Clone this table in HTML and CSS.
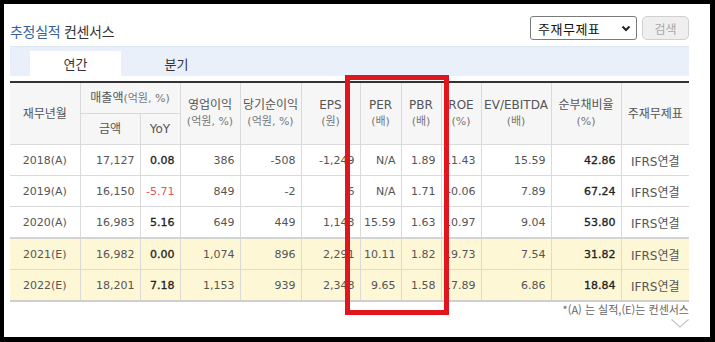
FILE: index.html
```html
<!DOCTYPE html>
<html lang="ko">
<head>
<meta charset="utf-8">
<link rel="stylesheet" href="styles.css">
</head>
<body>
<div class="panel">
  <div class="topbar">
    <h2 class="title"><span class="title-blue">추정실적</span> 컨센서스</h2>
    <div class="controls">
      <div class="select"><span>주재무제표</span>
        <svg class="sel-arrow" width="10" height="7" viewBox="0 0 10 7"><polyline points="1.5,1.5 5,5 8.5,1.5" fill="none" stroke="#222" stroke-width="2"/></svg>
      </div>
      <div class="btn">검색</div>
    </div>
  </div>
  <div class="tabs">
    <div class="tab active">연간</div>
    <div class="tab">분기</div>
  </div>
  <table class="grid">
    <colgroup>
      <col style="width:70px"><col style="width:60px"><col style="width:40px"><col style="width:60px"><col style="width:61px"><col style="width:59px"><col style="width:41px"><col style="width:40px"><col style="width:40px"><col style="width:70px"><col style="width:70px"><col style="width:68px">
    </colgroup>
    <thead>
      <tr class="h1">
        <th rowspan="2" class="first">재무년월</th>
        <th colspan="2">매출액<span class="unit">(억원, %)</span></th>
        <th rowspan="2">영업이익<br><span class="unit">(억원, %)</span></th>
        <th rowspan="2">당기순이익<br><span class="unit">(억원, %)</span></th>
        <th rowspan="2">EPS<br><span class="unit">(원)</span></th>
        <th rowspan="2">PER<br><span class="unit">(배)</span></th>
        <th rowspan="2">PBR<br><span class="unit">(배)</span></th>
        <th rowspan="2">ROE<br><span class="unit">(%)</span></th>
        <th rowspan="2">EV/EBITDA<br><span class="unit">(배)</span></th>
        <th rowspan="2">순부채비율<br><span class="unit">(%)</span></th>
        <th rowspan="2" class="last">주재무제표</th>
      </tr>
      <tr class="h2">
        <th>금액</th>
        <th>YoY</th>
      </tr>
    </thead>
    <tbody>
      <tr class="r1">
        <td class="first">2018(A)</td><td>17,127</td><td class="em">0.08</td><td>386</td><td>-508</td><td>-1,249</td><td>N/A</td><td>1.89</td><td>11.43</td><td>15.59</td><td class="em">42.86</td><td class="last">IFRS연결</td>
      </tr>
      <tr class="r2">
        <td class="first">2019(A)</td><td>16,150</td><td class="neg">-5.71</td><td>849</td><td>-2</td><td>6</td><td>N/A</td><td>1.71</td><td>-0.06</td><td>7.89</td><td class="em">67.24</td><td class="last">IFRS연결</td>
      </tr>
      <tr class="r1">
        <td class="first">2020(A)</td><td>16,983</td><td class="em">5.16</td><td>649</td><td>449</td><td>1,143</td><td>15.59</td><td>1.63</td><td>10.97</td><td>9.04</td><td class="em">53.80</td><td class="last">IFRS연결</td>
      </tr>
      <tr class="r2 est first-est">
        <td class="first">2021(E)</td><td>16,982</td><td class="em">0.00</td><td>1,074</td><td>896</td><td>2,291</td><td>10.11</td><td>1.82</td><td>19.73</td><td>7.54</td><td class="em">31.82</td><td class="last">IFRS연결</td>
      </tr>
      <tr class="r1 est last-row">
        <td class="first">2022(E)</td><td>18,201</td><td class="em">7.18</td><td>1,153</td><td>939</td><td>2,348</td><td>9.65</td><td>1.58</td><td>17.89</td><td>6.86</td><td class="em">18.84</td><td class="last">IFRS연결</td>
      </tr>
    </tbody>
  </table>
  <div class="note">*(A) 는 실적,(E)는 컨센서스</div>
  <div class="more">
    <svg width="18" height="9" viewBox="0 0 18 9"><polyline points="0.5,0.5 9,8 17.5,0.5" fill="none" stroke="#c4c4c4" stroke-width="1.2"/></svg>
  </div>
  <div class="highlight"></div>
</div>
</body>
</html>
```
FILE: styles.css
```css
html, body {
  margin: 0;
  padding: 0;
  background: #000;
}
body {
  width: 715px;
  height: 342px;
  overflow: hidden;
  font-family: "DejaVu Sans", "Noto Sans CJK KR", sans-serif;
}
.panel {
  position: relative;
  margin: 4px 5px 5px 4px;
  width: 706px;
  height: 333px;
  padding: 0 0 0 6px;
  background: #fff;
  box-sizing: border-box;
}
.topbar {
  display: flex;
  justify-content: space-between;
  align-items: flex-start;
  width: 679px;
  height: 42px;
  padding-top: 12px;
  box-sizing: border-box;
}
.title {
  margin: 0;
  margin-top: 5px;
  font-family: "Noto Sans CJK KR", sans-serif;
  font-size: 14px;
  font-weight: normal;
  color: #333;
  line-height: 20px;
  letter-spacing: -0.3px;
}
.title-blue {
  color: #36609e;
}
.controls {
  display: flex;
  gap: 5px;
}
.select {
  width: 107px;
  height: 24px;
  box-sizing: border-box;
  border: 1px solid #7a7a7a;
  border-radius: 3px;
  display: flex;
  align-items: center;
  justify-content: space-between;
  padding: 0 5px 0 7px;
  font-family: "Noto Sans CJK KR", sans-serif;
  font-size: 13px;
  color: #111;
  letter-spacing: 0.5px;
}
.btn {
  width: 47px;
  height: 24px;
  box-sizing: border-box;
  border: 1px solid #d0d0d0;
  border-radius: 5px;
  background: #efefef;
  color: #a8a8a8;
  font-family: "Noto Sans CJK KR", sans-serif;
  font-size: 12px;
  display: flex;
  align-items: center;
  justify-content: center;
}
.tabs {
  width: 679px;
  height: 30px;
  box-sizing: border-box;
  background: #e9f0fa;
  border-top: 1px solid #dde5ef;
  display: flex;
  align-items: flex-end;
  padding-left: 20px;
  gap: 10px;
}
.tab {
  width: 91px;
  height: 25px;
  display: flex;
  align-items: center;
  justify-content: center;
  font-family: "Noto Sans CJK KR", sans-serif;
  font-size: 13px;
  color: #333;
}
.tab.active {
  background: #fff;
}
.grid {
  margin-top: 5px;
  width: 679px;
  table-layout: fixed;
  border-collapse: collapse;
  border-top: 2px solid #333;
  font-size: 11px;
  color: #555;
}
.grid th {
  background: #f6f6f6;
  font-weight: normal;
  font-family: "DejaVu Sans", "Noto Sans CJK KR", sans-serif;
  font-size: 12px;
  color: #555;
  border: 1px solid #dadada;
  border-top: none;
  padding: 0;
  line-height: 16px;
  text-align: center;
}
.grid th .unit {
  font-size: 11px;
  color: #777;
}
.grid .h1 th { height: 30px; }
.grid .h2 th { height: 30px; }
.grid td {
  border: 1px solid #dadada;
  padding: 0 5px 0 0;
  text-align: right;
  height: 30px;
  white-space: nowrap;
}
.grid .first {
  border-left: none;
  text-align: center;
  padding: 0;
}
.grid .last {
  border-right: none;
  text-align: center;
  padding: 0;
  font-size: 12px;
}
.grid td.em {
  color: #222;
  -webkit-text-stroke: 0.3px #222;
}
.grid td.neg {
  color: #e35762;
}
.grid tr.est td {
  background: #fdf7d6;
}
.grid tr.first-est td {
  border-top: 2px solid #d4d4d4;
}
.grid tr.last-row td {
  border-bottom: 2px solid #cfcfcf;
}
.note {
  width: 679px;
  text-align: right;
  font-family: "Noto Sans CJK KR", sans-serif;
  font-size: 11px;
  color: #666;
  margin-top: 0;
  line-height: 15px;
}
.more {
  width: 679px;
  display: flex;
  justify-content: flex-end;
  margin-top: 2px;
}
.highlight {
  position: absolute;
  left: 341px;
  top: 71px;
  width: 104px;
  height: 240px;
  box-sizing: border-box;
  border: 5px solid #e0161f;
}
```
